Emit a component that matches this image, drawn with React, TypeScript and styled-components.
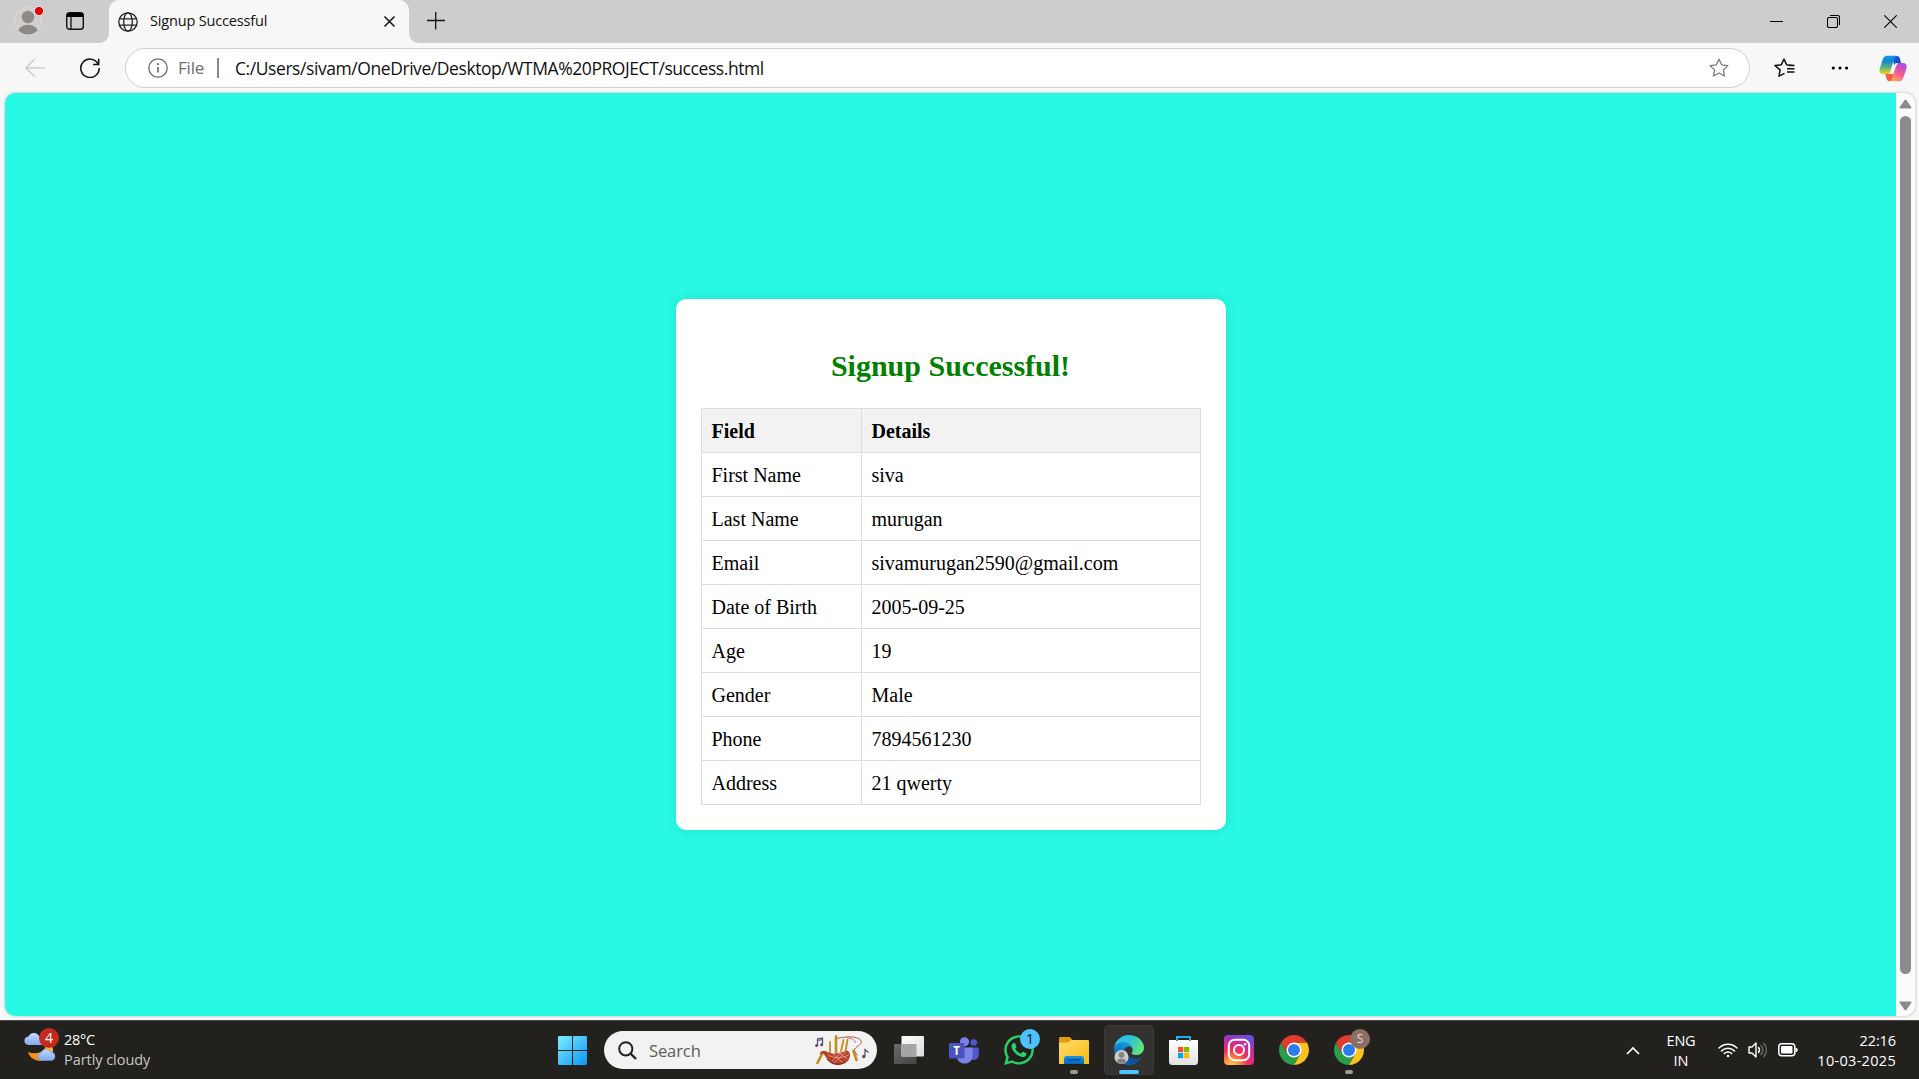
import React from 'react';
import styled, { createGlobalStyle } from 'styled-components';
import { FaWhatsapp } from 'react-icons/fa';

const GlobalStyle = createGlobalStyle`
  * { box-sizing: border-box; }
  body { margin: 0; overflow: hidden; background: #f7f7f7; }
`;

const uiFont = '"Open Sans", "Noto Sans", sans-serif';

const Screen = styled.div`
  width: 1919px;
  height: 1079px;
  display: flex;
  flex-direction: column;
  background: #f7f7f7;
  font-family: ${uiFont};
  overflow: hidden;
`;

const Label = styled.span<{ $size: number; $spacing?: number; $color?: string }>`
  font-size: ${(p) => p.$size}px;
  letter-spacing: ${(p) => p.$spacing ?? 0}px;
  color: ${(p) => p.$color ?? '#111'};
  line-height: 20px;
  white-space: nowrap;
`;

/* ---------- tab strip ---------- */

const TabStrip = styled.header`
  height: 43px;
  flex: none;
  display: flex;
  background: #cdcdcd;
`;

const TabStripLead = styled.div`
  width: 109px;
  display: flex;
  align-items: flex-start;
  gap: 21px;
  padding: 6px 0 0 13px;
`;

const WorkspaceIcon = styled.svg`
  margin-top: 6px;
`;

const Tab = styled.div`
  position: relative;
  width: 300px;
  height: 43px;
  display: flex;
  align-items: center;
  padding: 0 13px 0 9px;
  background: #f7f7f7;
  border-radius: 10px 10px 0 0;
  &::before,
  &::after {
    content: '';
    position: absolute;
    bottom: 0;
    width: 10px;
    height: 10px;
  }
  &::before {
    left: -10px;
    background: radial-gradient(circle at 0 0, #cdcdcd 9.5px, #f7f7f7 10.5px);
  }
  &::after {
    right: -10px;
    background: radial-gradient(circle at 100% 0, #cdcdcd 9.5px, #f7f7f7 10.5px);
  }
`;

const TabTitle = styled(Label)`
  flex: 1;
  margin-left: 12px;
  padding-bottom: 1px;
`;

const NewTab = styled.div`
  flex: 1;
  padding: 12px 0 0 18px;
`;

const WindowControls = styled.div`
  display: flex;
  gap: 44px;
  padding: 15px 22px 0 0;
`;

/* ---------- toolbar ---------- */

const Toolbar = styled.nav`
  height: 50px;
  flex: none;
  display: flex;
  align-items: center;
  padding: 0 12px 0 25px;
`;

const RefreshIcon = styled.svg`
  margin: 0 25px 0 35px;
`;

const AddressBar = styled.div`
  width: 1625px;
  height: 40px;
  display: flex;
  align-items: center;
  padding: 0 20px 0 22px;
  background: #fff;
  border: 1px solid #cfcfcf;
  border-radius: 20px;
`;

const Scheme = styled(Label)`
  width: 39px;
  margin-left: 10px;
`;

const Divider = styled.span`
  width: 2px;
  height: 20px;
  margin-right: 16px;
  background: #8a8a8a;
`;

const Url = styled(Label)`
  flex: 1;
`;

const ToolbarActions = styled.div`
  flex: 1;
  display: flex;
  align-items: center;
  justify-content: flex-end;
`;

const MoreIcon = styled.svg`
  margin: 0 30px 0 36px;
`;

/* ---------- page ---------- */

const Viewport = styled.main`
  height: 923px;
  flex: none;
  margin: 0 4px 4px 5px;
  display: flex;
  border-radius: 10px;
  overflow: hidden;
  background: #fcfcfc;
  box-shadow: 0 0 3px rgba(0, 0, 0, 0.28);
`;

const Page = styled.section`
  width: 1891px;
  padding-top: 206px;
  background: #28f9e4;
`;

const Card = styled.article`
  width: 550px;
  height: 531px;
  margin: 0 auto;
  padding: 25px;
  background: #fff;
  border-radius: 10px;
  box-shadow: 0 0 12.5px rgba(0, 0, 0, 0.1);
  font-family: 'Liberation Serif', serif;
`;

const CardTitle = styled.h2`
  margin: 25px 0;
  font-size: 30px;
  line-height: 34px;
  text-align: center;
  color: green;
`;

const DetailsTable = styled.table`
  width: 500px;
  table-layout: fixed;
  border-collapse: collapse;
  font-size: 20px;
  color: #000;
`;

const cell = `
  height: 44px;
  padding: 2px 10px 0;
  border: 1px solid #ddd;
  text-align: left;
  line-height: 23px;
`;

const HeadCell = styled.th<{ $width?: number }>`
  ${cell}
  width: ${(p) => (p.$width ? `${p.$width}px` : 'auto')};
  background: #f2f2f2;
`;

const Cell = styled.td`
  ${cell}
`;

const Scrollbar = styled.div`
  width: 19px;
  display: flex;
  flex-direction: column;
  align-items: center;
  justify-content: space-between;
  padding: 6px 0 5px;
`;

const Thumb = styled.div`
  width: 11px;
  height: 858px;
  margin-bottom: 21px;
  border-radius: 6px;
  background: #8b8b8b;
`;

/* ---------- taskbar ---------- */

const Taskbar = styled.footer`
  flex: 1;
  display: grid;
  grid-template-columns: 547px auto 1fr;
  background: #23211e;
  border-top: 1px solid #4a4a48;
`;

const Weather = styled.div`
  display: flex;
  padding: 6px 0 0 24px;
  gap: 4px;
`;

const WeatherText = styled.div`
  display: flex;
  flex-direction: column;
  padding-top: 3px;
`;

const Apps = styled.div`
  display: flex;
  align-items: center;
  gap: 5px;
`;

const AppButton = styled.div<{ $active?: boolean }>`
  position: relative;
  width: 50px;
  height: 50px;
  display: flex;
  align-items: center;
  justify-content: center;
  border-radius: 5px;
  background: ${(p) => (p.$active ? '#333230' : 'transparent')};
  box-shadow: ${(p) => (p.$active ? 'inset 0 0 0 1px #3b3a38' : 'none')};
`;

const Indicator = styled.i<{ $active?: boolean }>`
  position: absolute;
  bottom: 1px;
  left: 50%;
  width: ${(p) => (p.$active ? 20 : 8)}px;
  height: 4px;
  transform: translateX(-50%);
  border-radius: 2px;
  background: ${(p) => (p.$active ? '#4cc2ff' : '#9b9a99')};
`;

const AppBadge = styled.span<{ $bg: string; $color: string; $size: number }>`
  position: absolute;
  top: 4px;
  right: 4px;
  width: 20px;
  height: 20px;
  border-radius: 50%;
  background: ${(p) => p.$bg};
  color: ${(p) => p.$color};
  font-size: ${(p) => p.$size}px;
  line-height: 20px;
  text-align: center;
`;

const SearchBox = styled.div`
  width: 273px;
  height: 38px;
  margin: 0 2px;
  display: flex;
  align-items: center;
  padding: 0 7px 0 14px;
  border-radius: 19px;
  background: #f2f2f2;
`;

const SearchHint = styled(Label)`
  flex: 1;
  margin: 1px 0 0 12px;
`;

const Tray = styled.div`
  display: flex;
  justify-content: flex-end;
  align-items: center;
  padding-right: 23px;
`;

const TrayStack = styled.div<{ $width: number; $align: string; $left?: number }>`
  width: ${(p) => p.$width}px;
  margin-left: ${(p) => p.$left ?? 0}px;
  padding-top: 1px;
  display: flex;
  flex-direction: column;
  align-items: ${(p) => p.$align};
`;

const TrayIcons = styled.div`
  display: flex;
  align-items: center;
  gap: 10px;
  margin: 0 20px 0 17px;
`;

/* ---------- drawings ---------- */

const Avatar = () => (
  <svg width="32" height="30" viewBox="13 6 32 30">
    <defs>
      <clipPath id="av"><circle cx="28" cy="21" r="13.4" /></clipPath>
    </defs>
    <circle cx="28" cy="21" r="13.4" fill="#d1cfcd" stroke="#dedbd6" />
    <g clipPath="url(#av)" fill="#8e8a86">
      <circle cx="28" cy="17" r="6.2" />
      <ellipse cx="28" cy="33" rx="10.5" ry="8.2" />
    </g>
    <circle cx="39" cy="11" r="4.6" fill="#e60000" stroke="#eee" strokeWidth="1" />
  </svg>
);

const Globe = () => (
  <svg width="20" height="20" viewBox="0 0 20 20" fill="none" stroke="#222" strokeWidth="1.3">
    <circle cx="10" cy="10" r="9.2" />
    <ellipse cx="10" cy="10" rx="4.3" ry="9.2" />
    <path d="M1.6 6.8h16.8M1.6 13.2h16.8" />
  </svg>
);

const starPath = 'M10 1.2l2.7 5.6 6.2.8-4.5 4.3 1.1 6.1-5.5-3-5.5 3 1.1-6.1L1.1 7.6l6.2-.8z';

const Copilot = () => (
  <svg width="28" height="27" viewBox="0 0 28 27">
    <defs>
      <linearGradient id="cpa" x1="0" y1="0" x2="0" y2="1">
        <stop offset="0" stopColor="#1696e8" /><stop offset=".3" stopColor="#1286d8" />
        <stop offset=".6" stopColor="#4fb08a" /><stop offset="1" stopColor="#f3cf10" />
      </linearGradient>
      <linearGradient id="cpb" x1=".8" y1="0" x2=".3" y2="1">
        <stop offset="0" stopColor="#a44df0" /><stop offset=".5" stopColor="#f0569a" />
        <stop offset="1" stopColor="#ffa65c" />
      </linearGradient>
      <linearGradient id="cpc" x1="0" y1="0" x2="1" y2="1">
        <stop offset="0" stopColor="#1a6fe0" /><stop offset="1" stopColor="#1538b8" />
      </linearGradient>
    </defs>
    <path d="M13 1h5c1.6 0 2.4 1 2.9 2.6L22 8h-3c-2 0-3 1-3.6 3z" fill="url(#cpc)" />
    <path d="M15 26h-4.500c-1.800 0-2.500-1-3-2.600L6.300 19H10c2 0 2.600-1.500 3.300-3.500z" fill="#f0603a" />
    <path d="M8.500 .7H18c-1.600.2-2.300 1.300-2.900 3.300l-3.600 12c-.6 2-1.300 3-3.300 3H4C.6 19 0 16.200.9 13L3.700 4.600C4.600 1.800 5.800.7 8.500.7z" fill="url(#cpa)" />
    <path d="M19.500 26.300H10.300c1.600-.2 2.300-1.300 2.900-3.300l3.500-12c.6-2 1.300-3 3.300-3h4c3.400 0 4.200 2.800 3.300 6l-3 8.400c-.9 2.800-2.100 3.900-4.800 3.900z" fill="url(#cpb)" />
    <path d="M16.300 8.200h2.200l-5 10.800h-2.600z" fill="#fff" opacity=".9" />
  </svg>
);

const WeatherIcon = () => (
  <svg width="36" height="36" viewBox="24 1027 36 36">
    <defs>
      <linearGradient id="moon" x1="1" y1="0" x2="0" y2="1">
        <stop offset="0" stopColor="#ffc43a" /><stop offset="1" stopColor="#f07d10" />
      </linearGradient>
      <linearGradient id="cloud" x1="0" y1="0" x2="0" y2="1">
        <stop offset="0" stopColor="#c5d8ff" /><stop offset="1" stopColor="#83a9f0" />
      </linearGradient>
    </defs>
    <path d="M48 1045c4 0 5 3 5 5 0 7-6 11-12.500 11-6 0-11-3.500-12.500-9 8 3.500 17 0 18-7z" fill="url(#moon)" />
    <path d="M29 1045a4.300 4.300 0 0 1-.5-8.600 5.800 5.800 0 0 1 10.500-.3l5 3v6z" fill="url(#cloud)" />
    <path d="M41.500 1060.500a3.900 3.900 0 0 1-.4-7.700 5.500 5.500 0 0 1 10-.8 4.300 4.300 0 0 1 .4 8.500z" fill="url(#cloud)" stroke="#6d94de" strokeWidth=".7" />
    <circle cx="49" cy="1038" r="10" fill="#c42b1c" />
    <text x="49" y="1043" textAnchor="middle" fontFamily="Open Sans" fontSize="14" fill="#fff">4</text>
  </svg>
);

const StartLogo = () => (
  <svg width="29" height="29" viewBox="0 0 29 29">
    <defs>
      <linearGradient id="win" gradientUnits="userSpaceOnUse" x1="0" y1="0" x2="29" y2="29">
        <stop offset="0" stopColor="#7deeff" /><stop offset="1" stopColor="#0a95f5" />
      </linearGradient>
    </defs>
    <path d="M1 0h13v14H0V1zM15 0h13l1 1v13H15zM0 15h14v14H1l-1-1zM15 15h14v13l-1 1H15z" fill="url(#win)" />
  </svg>
);

const Bagpipes = () => (
  <svg width="56" height="32" viewBox="0 0 56 32" fill="none">
    <g stroke="#5b4668" strokeWidth="1.200">
      <path d="M3.500 11.500V5l5-1v6.500M3.500 6.500l5-1M51 22v-6.500l3.500 3" />
    </g>
    <g fill="#5b4668">
      <circle cx="2.600" cy="11.600" r="1.500" /><circle cx="7.600" cy="10.700" r="1.500" /><circle cx="49.800" cy="22.500" r="1.700" />
    </g>
    <path d="M23 4.500c8-2 20-3 24 2 2 5-7 6-6.500 10 .5 2 2 3 3 5" stroke="#b5584d" strokeWidth="1" />
    <path d="M33 4c6 0 9 3 8 5" stroke="#b5584d" strokeWidth=".8" />
    <g stroke="#c58a1d" strokeLinecap="round">
      <path d="M22 18V2.500" strokeWidth="2.600" />
      <path d="M16 19V8" strokeWidth="1.800" /><path d="M27 17l2.500-11M31.500 17l2-11" strokeWidth="1.800" />
      <path d="M8 20l-4.500 9" strokeWidth="2.600" /><path d="M39.500 17l3 9" strokeWidth="2.600" />
    </g>
    <path d="M5.500 20.500c1-4 4-4.500 8-2.500 7 3 14 1 19-1.500 6 1 5 13-7 14.500-8 .3-12-5-15-10-1.500-2-3-1.500-5-.5z" fill="#b9422d" />
    <path d="M14 21c7 4 14 3 21 0M18 19l11 10M24 18l9 7M32 18L20 29M27 19l-9 8" stroke="#eab09a" strokeWidth=".7" />
    <path d="M13 25c4 5.500 12 7 18 3" stroke="#7e231b" strokeWidth="1" />
  </svg>
);

const TaskView = () => (
  <svg width="30" height="28" viewBox="0 0 30 28">
    <defs>
      <linearGradient id="tvw" x1="0" y1="0" x2="1" y2="1">
        <stop offset="0" stopColor="#fff" /><stop offset="1" stopColor="#dcdcdc" />
      </linearGradient>
      <linearGradient id="tvg" x1="0" y1="0" x2="1" y2="1">
        <stop offset="0" stopColor="#6a6a6a" /><stop offset="1" stopColor="#444" />
      </linearGradient>
    </defs>
    <rect x="0" y="8" width="22.500" height="20" rx="1" fill="url(#tvg)" />
    <rect x="7.500" y="0" width="22.500" height="20.500" rx="1" fill="url(#tvw)" />
    <path d="M7.500 8h15v12.500H8.500l-1-1z" fill="#a5a5a5" />
  </svg>
);

const Teams = () => (
  <svg width="30" height="27" viewBox="0 0 30 27">
    <circle cx="24.700" cy="5.500" r="3.300" fill="#5059c9" />
    <path d="M20 10.500h8.500c.8 0 1.300.5 1.300 1.300v6.500c0 4-5 6-8 3.500z" fill="#5059c9" />
    <circle cx="15.500" cy="4.800" r="4.600" fill="#7b83eb" />
    <path d="M8 10.500h14.500c.7 0 1.200.5 1.200 1.200v7c0 10-15 11-16.500 0z" fill="#7b83eb" />
    <rect x="0" y="6" width="15.500" height="15.500" rx="1.300" fill="#4b53bc" />
    <text x="7.700" y="18" textAnchor="middle" fontFamily="Open Sans" fontWeight="700" fontSize="11.500" fill="#fff">T</text>
  </svg>
);

const Explorer = () => (
  <svg width="30" height="27" viewBox="0 0 30 27">
    <defs>
      <linearGradient id="fold" x1="0" y1="0" x2="1" y2="1">
        <stop offset="0" stopColor="#ffdc6b" /><stop offset="1" stopColor="#fbb90f" />
      </linearGradient>
      <linearGradient id="tray" x1="0" y1="0" x2="0" y2="1">
        <stop offset="0" stopColor="#1c93e3" /><stop offset="1" stopColor="#0a66bb" />
      </linearGradient>
    </defs>
    <path d="M1.500 0h8c1 0 1.500.3 2 .8L13.500 3v6H0V1.500C0 .6.600 0 1.500 0z" fill="#e19d0b" />
    <path d="M0 5.500h9l3.500-2.500H28.500c1 0 1.500.5 1.500 1.500V27H0z" fill="url(#fold)" />
    <path d="M5 27v-5.500C5 20 6 19 7.500 19h15c1.500 0 2.500 1 2.500 2.500V27z" fill="url(#tray)" />
    <path d="M8.500 22.800h13" stroke="#074f94" strokeWidth="1.400" strokeLinecap="round" />
  </svg>
);

const Edge = () => (
  <svg width="30" height="30" viewBox="0 0 256 256">
    <defs>
      <linearGradient id="ea" x1=".2" y1="0" x2="1" y2="0">
        <stop offset="0" stopColor="#0c59a4" /><stop offset="1" stopColor="#114a8b" />
      </linearGradient>
      <linearGradient id="eb" x1=".8" y1=".1" x2=".2" y2="1">
        <stop offset="0" stopColor="#1b9de2" /><stop offset=".4" stopColor="#1383d0" /><stop offset="1" stopColor="#0655a8" />
      </linearGradient>
      <linearGradient id="ec" x1="0" y1=".3" x2="1" y2=".7">
        <stop offset="0" stopColor="#35c1f1" /><stop offset=".45" stopColor="#2bc3d2" /><stop offset="1" stopColor="#66eb6e" />
      </linearGradient>
    </defs>
    <path fill="url(#ea)" d="M231 190.500c-3.400 1.800-6.900 3.400-10.500 4.700a101.500 101.500 0 0 1-35.900 6.400c-47.300 0-88.500-32.500-88.500-74.300a31.500 31.500 0 0 1 16.400-27.300c-42.800 1.800-53.800 46.400-53.800 72.500 0 74 68.100 81.400 82.800 81.400 7.900 0 19.800-2.300 27-4.600l1.300-.4a128.300 128.300 0 0 0 66.600-52.800 4 4 0 0 0-5.400-5.600z" />
    <path fill="url(#eb)" d="M105.700 241.400a79.200 79.200 0 0 1-22.700-21.300 80.700 80.700 0 0 1 29.500-120c3.200-1.500 8.500-4.100 15.600-4a32.400 32.400 0 0 1 25.700 13 31.900 31.900 0 0 1 6.300 18.700c0-.2 24.500-79.600-80-79.600-43.900 0-80 41.600-80 78.200a130.200 130.200 0 0 0 12.100 56 128 128 0 0 0 156.400 67 75.500 75.500 0 0 1-62.800-8z" />
    <path fill="url(#ec)" d="M152.300 148.900c-.9 1-3.400 2.500-3.400 5.600 0 2.600 1.700 5.200 4.800 7.300 14.300 10 41.400 8.600 41.500 8.600 10.700 0 21.100-2.900 30.300-8.300a61.400 61.400 0 0 0 30.400-52.900c.3-22.400-8-37.300-11.300-43.900C223.500 23.900 177.700 0 128 0A128 128 0 0 0 0 126.200c.5-36.500 36.800-66 80-66 3.500 0 23.500.3 42 10a72.600 72.600 0 0 1 30.900 29.300c6.100 10.600 7.200 24.100 7.200 29.500s-2.700 13.300-7.800 19.900z" />
    <circle cx="64" cy="188" r="60" fill="#cfcdcb" />
    <circle cx="64" cy="170" r="25" fill="#858280" />
    <path d="M25 226c0-34 78-34 78 0-20 26-58 26-78 0z" fill="#858280" />
  </svg>
);

const Store = () => (
  <svg width="30" height="30" viewBox="0 0 30 30">
    <defs>
      <linearGradient id="bag" x1="0" y1="0" x2="0" y2="1">
        <stop offset="0" stopColor="#fff" /><stop offset="1" stopColor="#e2e2e2" />
      </linearGradient>
    </defs>
    <path d="M0 6c0-.6.400-1 1-1h27c.6 0 1 .4 1 1v20.500c0 2-1 3.500-3 3.500H3c-2 0-3-1.500-3-3.500z" fill="url(#bag)" />
    <path d="M8 6V2h13v4" fill="none" stroke="#28a8ea" strokeWidth="2" />
    <path d="M9 12h5.200v5.200H9z" fill="#f25022" /><path d="M15 12h5.200v5.200H15z" fill="#7fba00" />
    <path d="M9 18h5.200v5.200H9z" fill="#00a4ef" /><path d="M15 18h5.200v5.200H15z" fill="#ffb900" />
  </svg>
);

const Instagram = () => (
  <svg width="30" height="30" viewBox="0 0 30 30" fill="none">
    <defs>
      <radialGradient id="ig" cx=".25" cy="1.050" r="1.100">
        <stop offset="0" stopColor="#ffd54f" /><stop offset=".25" stopColor="#ff8c3a" />
        <stop offset=".5" stopColor="#f2305e" /><stop offset=".78" stopColor="#c32aa3" /><stop offset="1" stopColor="#6a4be0" />
      </radialGradient>
    </defs>
    <rect width="30" height="30" rx="4" fill="url(#ig)" />
    <rect x="4.800" y="4.800" width="20.400" height="20.400" rx="6" stroke="#fff" strokeWidth="2" />
    <circle cx="15" cy="15" r="5" stroke="#fff" strokeWidth="2" />
    <circle cx="21" cy="9.200" r="1.300" fill="#fff" />
  </svg>
);

const Chrome = () => (
  <svg width="30" height="30" viewBox="0 0 48 48">
    <path fill="#2a9d4a" d="M13.610 30L3.220 12A24 24 0 0 0 24 48L34.390 30z" />
    <path fill="#fcc31e" d="M34.390 30L24 48A24 24 0 0 0 44.780 12H24z" />
    <path fill="#e33b2e" d="M24 12H44.780A24 24 0 0 0 3.220 12L13.610 30z" />
    <circle cx="24" cy="24" r="12" fill="#fff" />
    <circle cx="24" cy="24" r="9.600" fill="#2b7de9" />
  </svg>
);

/* ---------- data ---------- */

const details: [string, string][] = [
  ['First Name', 'siva'],
  ['Last Name', 'murugan'],
  ['Email', 'sivamurugan2590@gmail.com'],
  ['Date of Birth', '2005-09-25'],
  ['Age', '19'],
  ['Gender', 'Male'],
  ['Phone', '7894561230'],
  ['Address', '21 qwerty'],
];

export default function App() {
  return (
    <Screen>
      <GlobalStyle />
      <TabStrip>
        <TabStripLead>
          <Avatar />
          <WorkspaceIcon width="18" height="18" viewBox="0 0 18 18">
            <rect x=".7" y=".7" width="16.600" height="16.600" rx="2.800" fill="none" stroke="#111" strokeWidth="1.400" />
            <path d="M.7 5V3A2.500 2.500 0 0 1 3.200.7h11.600A2.500 2.500 0 0 1 17.300 3v2z" fill="#000" />
            <path d="M5 5v12" stroke="#111" strokeWidth="1.300" />
          </WorkspaceIcon>
        </TabStripLead>
        <Tab>
          <Globe />
          <TabTitle $size={14.5} $spacing={-0.17}>Signup Successful</TabTitle>
          <svg width="13" height="13" viewBox="0 0 13 13"><path d="M1.500 1.500l10 10M11.500 1.500l-10 10" stroke="#111" strokeWidth="1.500" /></svg>
        </Tab>
        <NewTab>
          <svg width="18" height="18" viewBox="0 0 18 18"><path d="M0 8.500h18M8.700 0v17.500" stroke="#111" strokeWidth="1.300" /></svg>
        </NewTab>
        <WindowControls>
          <svg width="13" height="13" viewBox="0 0 13 13"><path d="M0 6.500h13" stroke="#000" /></svg>
          <svg width="13" height="13" viewBox="0 0 13 13" fill="none" stroke="#000" strokeWidth="1.100">
            <rect x=".5" y="2.500" width="10" height="10" rx="1.500" /><path d="M3 .5h7.500c1.300 0 2 .7 2 2V10" />
          </svg>
          <svg width="13" height="13" viewBox="0 0 13 13"><path d="M.3.3l12.400 12.400M12.700.3L.3 12.700" stroke="#000" strokeWidth="1.100" /></svg>
        </WindowControls>
      </TabStrip>

      <Toolbar>
        <svg width="20" height="20" viewBox="0 0 20 20" fill="none" stroke="#c6c6c6" strokeWidth="1.300"><path d="M20 9.800H.8M9.800 1L.8 9.800l9 8.800" /></svg>
        <RefreshIcon width="20" height="20" viewBox="0 0 20 20" fill="none" stroke="#111" strokeWidth="1.500">
          <path d="M18.300 6.300A9.200 9.200 0 1 0 19.200 10M18.700.8v5.600h-5.600" />
        </RefreshIcon>
        <AddressBar>
          <svg width="20" height="20" viewBox="0 0 20 20" fill="none" stroke="#6e6e6e" strokeWidth="1.300">
            <circle cx="10" cy="10" r="9.200" /><path d="M10 9v5.500" strokeWidth="1.700" /><circle cx="10" cy="6.200" r="1.100" fill="#6e6e6e" stroke="none" />
          </svg>
          <Scheme $size={17} $spacing={-0.2} $color="#6e6e6e">File</Scheme>
          <Divider />
          <Url $size={17.5} $spacing={-0.43}>C:/Users/sivam/OneDrive/Desktop/WTMA%20PROJECT/success.html</Url>
          <svg width="20" height="20" viewBox="0 0 20 20" fill="none" stroke="#7a7a7a" strokeWidth="1.300" strokeLinejoin="round"><path d={starPath} /></svg>
        </AddressBar>
        <ToolbarActions>
          <svg width="21" height="20" viewBox="0 0 21 20" fill="none" stroke="#111" strokeWidth="1.500" strokeLinejoin="round">
            <path d="M10.500 15.300l-5.500 2.900 1.100-6.300L1 7.600l6.200-.8L10 1.200l2.700 5.600 7.300.6M13 10.700h7.500M13 14h7.500M14.500 7.400h6" />
          </svg>
          <MoreIcon width="18" height="4" viewBox="0 0 18 4"><circle cx="2.300" cy="2" r="1.600" /><circle cx="9" cy="2" r="1.600" /><circle cx="15.600" cy="2" r="1.600" /></MoreIcon>
          <Copilot />
        </ToolbarActions>
      </Toolbar>

      <Viewport>
        <Page>
          <Card>
            <CardTitle>Signup Successful!</CardTitle>
            <DetailsTable>
              <thead>
                <tr><HeadCell $width={160}>Field</HeadCell><HeadCell>Details</HeadCell></tr>
              </thead>
              <tbody>
                {details.map(([field, value]) => (
                  <tr key={field}><Cell>{field}</Cell><Cell>{value}</Cell></tr>
                ))}
              </tbody>
            </DetailsTable>
          </Card>
        </Page>
        <Scrollbar>
          <svg width="13" height="10" viewBox="0 0 13 10"><path d="M6.500 1.500l5 7h-10z" fill="#8b8b8b" stroke="#8b8b8b" strokeWidth="2" strokeLinejoin="round" /></svg>
          <Thumb />
          <svg width="13" height="10" viewBox="0 0 13 10"><path d="M6.500 8.500l5-7h-10z" fill="#8b8b8b" stroke="#8b8b8b" strokeWidth="2" strokeLinejoin="round" /></svg>
        </Scrollbar>
      </Viewport>

      <Taskbar>
        <Weather>
          <WeatherIcon />
          <WeatherText>
            <Label $size={14.5} $spacing={-0.3} $color="#fff">28°C</Label>
            <Label $size={14.5} $spacing={-0.05} $color="#c8c7c6">Partly cloudy</Label>
          </WeatherText>
        </Weather>
        <Apps>
          <AppButton><StartLogo /></AppButton>
          <SearchBox>
            <svg width="19" height="19" viewBox="0 0 19 19" fill="none" stroke="#222" strokeWidth="2"><circle cx="7.800" cy="7.800" r="6.600" /><path d="M12.500 12.500l5.500 5.500" strokeWidth="2.400" /></svg>
            <SearchHint $size={16.5} $spacing={-0.1} $color="#5c5c5c">Search</SearchHint>
            <Bagpipes />
          </SearchBox>
          <AppButton><TaskView /></AppButton>
          <AppButton><Teams /></AppButton>
          <AppButton><FaWhatsapp size={34} color="#25d366" /><AppBadge $bg="#4cc2ff" $color="#111" $size={14}>1</AppBadge></AppButton>
          <AppButton><Explorer /><Indicator /></AppButton>
          <AppButton $active><Edge /><Indicator $active /></AppButton>
          <AppButton><Store /></AppButton>
          <AppButton><Instagram /></AppButton>
          <AppButton><Chrome /></AppButton>
          <AppButton><Chrome /><AppBadge $bg="#8d6e63" $color="#e8dfdc" $size={12}>S</AppBadge><Indicator /></AppButton>
        </Apps>
        <Tray>
          <svg width="14" height="9" viewBox="0 0 14 9" fill="none" stroke="#fff" strokeWidth="1.700"><path d="M1 8l6-6 6 6" /></svg>
          <TrayStack $width={40} $align="center" $left={21}>
            <Label $size={14.5} $spacing={-0.2} $color="#fff">ENG</Label>
            <Label $size={14.5} $color="#fff">IN</Label>
          </TrayStack>
          <TrayIcons>
            <svg width="20" height="16" viewBox="0 0 20 16" fill="none" stroke="#fff" strokeWidth="1.500" strokeLinecap="round">
              <path d="M1 6a12.500 12.500 0 0 1 18 0M3.600 8.900a9 9 0 0 1 12.800 0M6.300 11.500a5.300 5.300 0 0 1 7.400 0" /><circle cx="10" cy="14" r="1.300" fill="#fff" stroke="none" />
            </svg>
            <svg width="20" height="18" viewBox="0 0 20 18" fill="none" stroke="#fff" strokeWidth="1.400" strokeLinejoin="round" strokeLinecap="round">
              <path d="M1 6h3l4-4v14l-4-4H1zM10.500 6.500a4 4 0 0 1 0 5" /><path d="M13 4.500a6.500 6.500 0 0 1 0 9M15.700 2.200a10 10 0 0 1 0 13.600" stroke="#6a6866" />
            </svg>
            <svg width="20" height="14" viewBox="0 0 20 14" fill="none">
              <rect x=".8" y=".8" width="16" height="12" rx="3" stroke="#fff" strokeWidth="1.500" /><rect x="3" y="3" width="11.500" height="7.600" rx="1" fill="#fff" /><path d="M17.500 4.800c3 0 3 4.400 0 4.400z" fill="#fff" />
            </svg>
          </TrayIcons>
          <TrayStack $width={78} $align="flex-end">
            <Label $size={14.5} $spacing={-0.1} $color="#fff">22:16</Label>
            <Label $size={14.5} $spacing={0.3} $color="#fff">10-03-2025</Label>
          </TrayStack>
        </Tray>
      </Taskbar>
    </Screen>
  );
}
